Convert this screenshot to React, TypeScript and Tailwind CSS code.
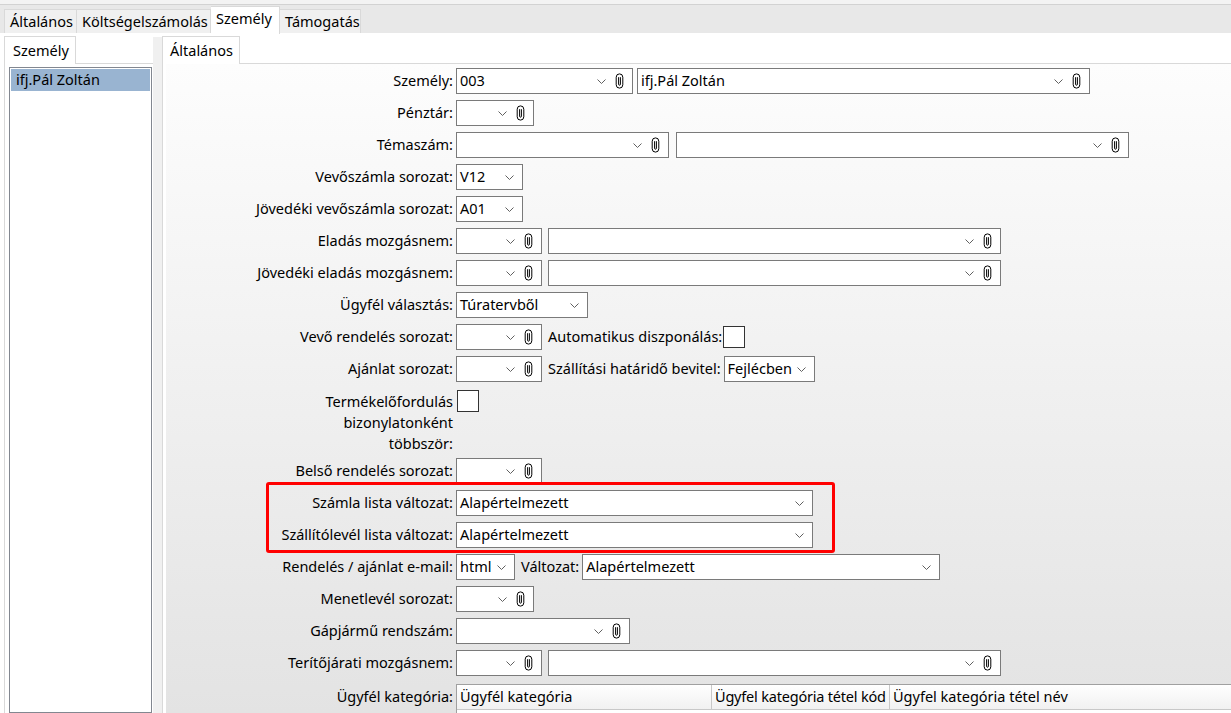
import React from "react";

const Chevron = () => (
  <svg width="9" height="5" viewBox="0 0 9 5" className="shrink-0">
    <path d="M0.5 0.5L4.5 4.5L8.5 0.5" fill="none" stroke="#606060" strokeWidth="1" />
  </svg>
);

const Clip = () => (
  <svg width="9" height="16" viewBox="0 0 9 16" className="shrink-0 block">
    <path d="M1.2 4.2A3.3 3.3 0 0 1 7.8 4.2V11.8A3.3 3.3 0 0 1 1.2 11.8Z" fill="none" stroke="#000" strokeWidth="1" />
    <path d="M3.6 4.2V11.3A0.9 0.9 0 0 0 5.4 11.3V4.2" fill="none" stroke="#000" strokeWidth="1" />
  </svg>
);

function Combo({ w, value = "", clip = true, cls = "" }: { w: string; value?: string; clip?: boolean; cls?: string }) {
  return (
    <div className={`h-[26px] border border-[#7a7a7a] bg-white flex items-center shrink-0 ${w} ${cls}`}>
      <span className="flex-1 pl-[3px] whitespace-nowrap overflow-hidden">{value}</span>
      <Chevron />
      {clip ? (
        <span className="ml-[9px] mr-[8px]">
          <Clip />
        </span>
      ) : (
        <span className="w-[8px] shrink-0" />
      )}
    </div>
  );
}

function Row({ label, children }: { label: string; children?: React.ReactNode }) {
  return (
    <div className="h-[32px] flex items-center shrink-0">
      <div className="w-[287px] text-right whitespace-nowrap shrink-0">{label}</div>
      <div className="ml-[3px] flex items-center">{children}</div>
    </div>
  );
}

const Check = ({ cls = "" }: { cls?: string }) => (
  <div className={`w-[22px] h-[22px] border border-[#333] bg-white shrink-0 ${cls}`} />
);

export default function App() {
  return (
    <div
      className="w-[1231px] h-[713px] overflow-hidden bg-white text-black text-[14.5px] flex flex-col"
      style={{ fontFamily: '"Noto Sans", "Open Sans", sans-serif' }}
    >
      {/* top tabs */}
      <div className="h-[4px] bg-[#f3f3f3] shrink-0" />
      <div className="h-[29px] bg-[#e8e8e8] border-t border-[#d2d2d2] flex items-end pl-[4px] shrink-0 relative">
        <div className="h-[24px] px-[5px] bg-[#f0f0f0] border border-b-0 border-[#d9d9d9] flex items-center w-[73px]">Általános</div>
        <div className="h-[24px] px-[5px] bg-[#f0f0f0] border border-b-0 border-l-0 border-[#d9d9d9] flex items-center w-[134px]">Költségelszámolás</div>
        <div className="h-[28px] px-[5px] bg-white border border-b-0 border-l-0 border-[#d9d9d9] flex items-center w-[69px] relative top-[1px] pb-[3px]">Személy</div>
        <div className="h-[24px] px-[5px] bg-[#f0f0f0] border border-b-0 border-l-0 border-[#d9d9d9] flex items-center w-[81px]">Támogatás</div>
      </div>

      <div className="flex-1 flex min-h-0 pt-[3px]">
        {/* left column */}
        <div className="w-[149px] ml-[4px] flex flex-col shrink-0">
          <div className="flex h-[28px] shrink-0">
            <div className="w-[72px] bg-white border border-b-0 border-[#d9d9d9] flex items-center pl-[8px]">Személy</div>
            <div className="flex-1 border-b border-[#d9d9d9]" />
          </div>
          <div className="flex-1 border-l border-[#d9d9d9] pl-[4px] pr-[1px] pt-[3px] flex flex-col min-h-0">
            <div className="flex-1 border border-[#828790] bg-white p-[1px]">
              <div className="h-[22px] bg-[#99b4d1] flex items-center pl-[5px]">ifj.Pál Zoltán</div>
            </div>
          </div>
        </div>
        <div className="w-[9px] bg-[#f0f0f0] shrink-0 mt-[1px]" />

        {/* right column */}
        <div className="flex-1 flex flex-col min-w-0">
          <div className="flex h-[28px] shrink-0">
            <div className="w-[78px] bg-white border border-b-0 border-[#d9d9d9] flex items-center pl-[7px]">Általános</div>
            <div className="flex-1 border-b border-[#d9d9d9]" />
          </div>
          <div className="flex-1 border-l border-[#d9d9d9] pl-[3px] bg-white min-h-0 flex">
            <div className="flex-1 bg-[linear-gradient(#fdfdfd,#e3e3e3)] pt-[1px] flex flex-col overflow-hidden">
              <Row label="Személy:">
                <Combo w="w-[177px]" value="003" />
                <Combo w="w-[453px]" value="ifj.Pál Zoltán" cls="ml-[4px]" />
              </Row>
              <Row label="Pénztár:">
                <Combo w="w-[78px]" />
              </Row>
              <Row label="Témaszám:">
                <Combo w="w-[213px]" />
                <Combo w="w-[453px]" cls="ml-[7px]" />
              </Row>
              <Row label="Vevőszámla sorozat:">
                <Combo w="w-[67px]" value="V12" clip={false} />
              </Row>
              <Row label="Jövedéki vevőszámla sorozat:">
                <Combo w="w-[67px]" value="A01" clip={false} />
              </Row>
              <Row label="Eladás mozgásnem:">
                <Combo w="w-[86px]" />
                <Combo w="w-[453px]" cls="ml-[6px]" />
              </Row>
              <Row label="Jövedéki eladás mozgásnem:">
                <Combo w="w-[86px]" />
                <Combo w="w-[453px]" cls="ml-[6px]" />
              </Row>
              <Row label="Ügyfél választás:">
                <Combo w="w-[132px]" value="Túratervből" clip={false} />
              </Row>
              <Row label="Vevő rendelés sorozat:">
                <Combo w="w-[86px]" />
                <span className="ml-[6px] whitespace-nowrap">Automatikus diszponálás:</span>
                <Check cls="ml-[1px]" />
              </Row>
              <Row label="Ajánlat sorozat:">
                <Combo w="w-[86px]" />
                <span className="ml-[6px] whitespace-nowrap">Szállítási határidő bevitel:</span>
                <Combo w="w-[91px]" value="Fejlécben" clip={false} cls="ml-[3px]" />
              </Row>
              <div className="h-[70px] flex items-start pt-[6px] shrink-0">
                <div className="w-[287px] text-right leading-[21px] shrink-0 pl-[140px]">
                  Termékelőfordulás bizonylatonként többször:
                </div>
                <Check cls="ml-[4px] -mt-[1px]" />
              </div>
              <Row label="Belső rendelés sorozat:">
                <Combo w="w-[86px]" />
              </Row>
              <div className="relative shrink-0">
                <Row label="Számla lista változat:">
                  <Combo w="w-[357px]" value="Alapértelmezett" clip={false} />
                </Row>
                <Row label="Szállítólevél lista változat:">
                  <Combo w="w-[357px]" value="Alapértelmezett" clip={false} />
                </Row>
                <div className="absolute left-[100px] top-[-5px] w-[569px] h-[71px] border-[3px] border-[#ff0000] rounded-[3px] pointer-events-none" />
              </div>
              <Row label="Rendelés / ajánlat e-mail:">
                <Combo w="w-[59px]" value="html" clip={false} />
                <span className="ml-[6px] whitespace-nowrap">Változat:</span>
                <Combo w="w-[358px]" value="Alapértelmezett" clip={false} cls="ml-[3px]" />
              </Row>
              <Row label="Menetlevél sorozat:">
                <Combo w="w-[78px]" />
              </Row>
              <Row label="Gápjármű rendszám:">
                <Combo w="w-[174px]" />
              </Row>
              <Row label="Terítőjárati mozgásnem:">
                <Combo w="w-[86px]" />
                <Combo w="w-[453px]" cls="ml-[6px]" />
              </Row>
              <div className="flex items-start pt-[5px] shrink-0">
                <div className="w-[287px] text-right whitespace-nowrap shrink-0 h-[25px] flex items-center justify-end">Ügyfél kategória:</div>
                <div className="ml-[3px] flex-1 flex flex-col border-t border-l border-[#a0a0a0] bg-white">
                  <div className="flex h-[25px] bg-[linear-gradient(#ffffff,#f1f1f1)] border-b border-[#c8c8c8]">
                    <div className="w-[255px] border-r border-[#c8c8c8] flex items-center pl-[3px] whitespace-nowrap">Ügyfél kategória</div>
                    <div className="w-[178px] border-r border-[#c8c8c8] flex items-center pl-[3px] whitespace-nowrap overflow-hidden tracking-[-0.2px]">Ügyfel kategória tétel kód</div>
                    <div className="flex-1 flex items-center pl-[3px] whitespace-nowrap">Ügyfel kategória tétel név</div>
                  </div>
                  <div className="h-[20px] bg-white" />
                </div>
              </div>
            </div>
          </div>
        </div>
      </div>
    </div>
  );
}
